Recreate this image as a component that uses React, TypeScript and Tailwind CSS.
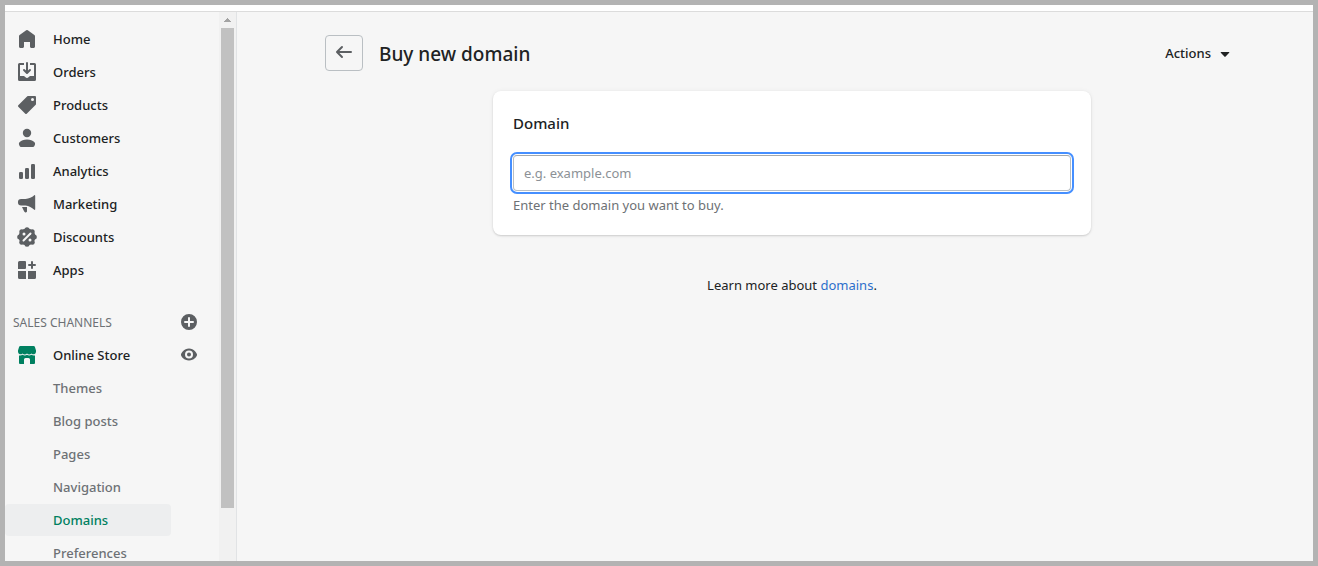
/**
 * Buy new domain – admin page with the store navigation on the left
 * and the domain search card in the main column.
 */

import type { ReactNode } from "react";

interface IconProps {
  children: ReactNode;
  className?: string;
}

function Icon({ children, className = "size-5" }: IconProps) {
  return (
    <svg viewBox="0 0 20 20" fill="currentColor" fillRule="evenodd" aria-hidden="true" className={`shrink-0 ${className}`}>
      {children}
    </svg>
  );
}

const NAV_ITEMS: { label: string; icon: ReactNode }[] = [
  {
    label: "Home",
    icon: (
      <path d="M18 7.261V17.5c0 .841-.672 1.5-1.5 1.5h-2c-.828 0-1.5-.659-1.5-1.5V13H7v4.477C7 18.318 6.328 19 5.5 19h-2c-.828 0-1.5-.682-1.5-1.523V7.261a1.5 1.5 0 0 1 .615-1.21l6.59-4.82a1.481 1.481 0 0 1 1.59 0l6.59 4.82A1.5 1.5 0 0 1 18 7.26z" />
    ),
  },
  {
    label: "Orders",
    icon: (
      <>
        <path d="M11 1a1 1 0 1 0-2 0v7.586L7.707 7.293a1 1 0 0 0-1.414 1.414l3 3a1 1 0 0 0 1.414 0l3-3a1 1 0 0 0-1.414-1.414L11 8.586V1z" />
        <path d="M3 14V3h4V1H2.5A1.5 1.5 0 0 0 1 2.5v15A1.5 1.5 0 0 0 2.5 19h15a1.5 1.5 0 0 0 1.5-1.5v-15A1.5 1.5 0 0 0 17.5 1H13v2h4v11h-3.5c-.775 0-1.388.662-1.926 1.244l-.11.12A1.994 1.994 0 0 1 10 16a1.994 1.994 0 0 1-1.463-.637l-.111-.12C7.888 14.664 7.275 14 6.5 14H3z" />
      </>
    ),
  },
  {
    label: "Products",
    icon: (
      <path d="M10.293 1.293A1 1 0 0 1 11 1h7a1 1 0 0 1 1 1v7a1 1 0 0 1-.293.707l-9 9a1 1 0 0 1-1.414 0l-7-7a1 1 0 0 1 0-1.414l9-9zM15.5 6a1.5 1.5 0 1 0 0-3 1.5 1.5 0 0 0 0 3z" />
    ),
  },
  {
    label: "Customers",
    icon: (
      <>
        <circle cx="10" cy="5" r="4.2" />
        <path d="M10 11.6c3.3 0 5.8 1.2 7.2 2.500.8.7 1 1.400.8 2.300-.4 1.700-1.200 2.600-3 2.600H5c-1.800 0-2.600-.9-3-2.600-.2-.9 0-1.600.8-2.300 1.400-1.300 3.900-2.500 7.200-2.500z" />
      </>
    ),
  },
  {
    label: "Analytics",
    icon: (
      <>
        <rect x="2" y="11" width="4" height="7" rx="1.3" />
        <rect x="8" y="7" width="4" height="11" rx="1.3" />
        <rect x="14" y="3" width="4" height="15" rx="1.3" />
      </>
    ),
  },
  {
    label: "Marketing",
    icon: (
      <>
        <path d="M17.300 1.200c.4-.3.900 0 .9.500v13.600c0 .5-.5.800-.9.500C14.800 13.600 12 12 8.500 11.500H4.200A3.200 3.200 0 0 1 4.200 5h4.300c3.500-.4 6.300-1.800 8.800-3.800z" />
        <path d="M5 13h5v4.200c0 .7-.5 1.200-1.200 1.200h-.4c-.5 0-1-.3-1.200-.8L5 13z" />
      </>
    ),
  },
  {
    label: "Discounts",
    icon: (
      <>
        <circle cx="10" cy="10" r="8.4" />
        <circle cx="10" cy="2.700" r="2.500" />
        <circle cx="15.200" cy="4.800" r="2.500" />
        <circle cx="17.300" cy="10" r="2.500" />
        <circle cx="15.200" cy="15.200" r="2.500" />
        <circle cx="10" cy="17.300" r="2.500" />
        <circle cx="4.800" cy="15.200" r="2.500" />
        <circle cx="2.700" cy="10" r="2.500" />
        <circle cx="4.800" cy="4.800" r="2.500" />
        <g className="fill-[#f6f6f6] stroke-[#f6f6f6]">
          <path d="M6.500 13.500l7-7" strokeWidth="2" strokeLinecap="round" />
          <circle cx="7" cy="7" r="1.500" strokeWidth="0" />
          <circle cx="13" cy="13" r="1.500" strokeWidth="0" />
        </g>
      </>
    ),
  },
  {
    label: "Apps",
    icon: (
      <>
        <path d="M2.500 1H8a1 1 0 0 1 1 1v6a1 1 0 0 1-1 1H1V2.500A1.500 1.500 0 0 1 2.500 1zM1 11h8v8H2.500A1.500 1.500 0 0 1 1 17.500V11zM11 11h8v6.500a1.500 1.500 0 0 1-1.500 1.500H11v-8z" />
        <path d="M14 2a1 1 0 1 1 2 0v2h2a1 1 0 1 1 0 2h-2v2a1 1 0 1 1-2 0V6h-2a1 1 0 1 1 0-2h2V2z" />
      </>
    ),
  },
];

const STORE_PAGES = ["Themes", "Blog posts", "Pages", "Navigation", "Domains", "Preferences"];

function Sidebar() {
  return (
    <aside className="flex w-58 shrink-0 overflow-hidden border-r border-[#e1e3e5]">
      <nav className="flex min-w-0 flex-1 flex-col pt-[11px] text-[13px] font-medium text-[#202223]">
        <ul className="space-y-px">
          {NAV_ITEMS.map((item) => (
            <li key={item.label}>
              <a href="#" className="flex h-8 items-center gap-4 pl-3">
                <Icon className="size-5 text-[#5c5f62]">{item.icon}</Icon>
                <span className="pt-0.5">{item.label}</span>
              </a>
            </li>
          ))}
        </ul>

        <div className="mt-5 flex h-8 shrink-0 items-center justify-between pr-5 pl-2">
          <h2 className="pt-0.5 text-xs font-normal text-[#6d7175]">SALES CHANNELS</h2>
          <button type="button" aria-label="Add sales channel" className="text-[#5c5f62]">
            <Icon>
              <path d="M10 2a8 8 0 1 0 0 16 8 8 0 0 0 0-16zM9 6a1 1 0 1 1 2 0v3h3a1 1 0 1 1 0 2h-3v3a1 1 0 1 1-2 0v-3H6a1 1 0 1 1 0-2h3V6z" />
            </Icon>
          </button>
        </div>

        <div className="mt-px flex h-8 shrink-0 items-center justify-between pr-5 pl-3">
          <a href="#" className="flex items-center gap-4">
            <Icon className="size-5 text-[#008060]">
              <path d="M3.500 1h13A1.500 1.500 0 0 1 18 2.200l1 3.300v1.200a2.600 2.600 0 0 1-4.500 1.800 3 3 0 0 1-4.500 0 3 3 0 0 1-4.500 0A2.600 2.600 0 0 1 1 6.700V5.500l1-3.300A1.500 1.500 0 0 1 3.500 1z" />
              <path d="M2 10.500c1.400.2 2.600 0 3.600-.7 1.300.9 3.100.9 4.400 0 1.300.9 3.100.9 4.400 0 1 .7 2.200.9 3.600.7V18a1 1 0 0 1-1 1h-4v-4.500a1.500 1.500 0 0 0-1.500-1.500h-3A1.500 1.500 0 0 0 7 14.500V19H3a1 1 0 0 1-1-1v-7.500z" />
            </Icon>
            <span className="pt-0.5">Online Store</span>
          </a>
          <button type="button" aria-label="View your online store" className="text-[#5c5f62]">
            <Icon>
              <path d="M10 3.500c-5 0-7.800 4.400-8 6a.8.8 0 0 0 0 .5c.2 1.600 3 5.500 8 5.500s7.800-3.900 8-5.500a.8.8 0 0 0 0-.5c-.2-1.600-3-6-8-6zM10 5.600a4 4 0 1 1 0 8 4 4 0 0 1 0-8zm0 2a2 2 0 1 0 0 4 2 2 0 0 0 0-4z" />
            </Icon>
          </button>
        </div>

        <ul className="mt-px space-y-px">
          {STORE_PAGES.map((page) => (
            <li key={page} className="pr-12">
              <a
                href="#"
                aria-current={page === "Domains" ? "page" : undefined}
                className={
                  page === "Domains"
                    ? "flex h-8 items-center rounded bg-[#edeeef] pt-0.5 pl-12 text-[#008060]"
                    : "flex h-8 items-center pt-0.5 pl-12 text-[#6d7175]"
                }
              >
                {page}
              </a>
            </li>
          ))}
        </ul>
      </nav>

      {/* Scroll track */}
      <div className="flex w-[17px] shrink-0 flex-col items-center bg-[#f1f1f1] text-[#a3a3a3]">
        <div className="flex h-4 shrink-0 items-center">
          <svg viewBox="0 0 7 4" className="w-[7px]" fill="currentColor" aria-hidden="true">
            <path d="M3 0h1v1h1v1h1v1h1v1H0V3h1V2h1V1h1z" />
          </svg>
        </div>
        <div className="h-[480px] w-[13px] shrink-0 bg-[#c1c1c1]" />
      </div>
    </aside>
  );
}

function DomainCard() {
  return (
    <section className="mx-auto mt-5 max-w-[598px] rounded-lg bg-white p-5 shadow-[0_0_5px_rgba(23,24,24,0.05),0_1px_2px_rgba(0,0,0,0.15)]">
      <label htmlFor="domain" className="block text-[15px] leading-6 font-medium">
        Domain
      </label>
      <input
        id="domain"
        type="text"
        placeholder="e.g. example.com"
        aria-describedby="domain-help"
        className="mt-5 block h-9 w-full rounded border border-[#babfc3] border-t-[#a4a8ab] px-2.5 text-[13px] outline-2 outline-offset-1 outline-[#458fff] placeholder:text-[#8c9196]"
      />
      <p id="domain-help" className="mt-1 leading-5 text-[#6d7175]">
        Enter the domain you want to buy.
      </p>
    </section>
  );
}

export default function App() {
  return (
    <div className="flex h-screen flex-col overflow-hidden border-5 border-[#b3b3b3] bg-[#f6f6f6] font-['Noto_Sans','Open_Sans',sans-serif] text-[13px] text-[#202223]">
      <div className="h-[7px] shrink-0 border-b border-[#dcdcdc] bg-white" />
      <div className="flex min-h-0 flex-1">
        <Sidebar />
        <main className="min-w-0 flex-1 pt-[23px] pl-[34px]">
          <div className="mx-auto max-w-[998px] px-8">
            <header className="flex items-center">
              <button
                type="button"
                aria-label="Back to domains"
                className="flex h-9 w-[38px] items-center justify-center rounded border border-[#babfc3] text-[#5c5f62]"
              >
                <Icon>
                  <path d="M17 8H5.414l3.293-3.293a1 1 0 0 0-1.414-1.414l-5 5a1 1 0 0 0 0 1.414l5 5a1 1 0 0 0 1.414-1.414L5.414 10H17a1 1 0 1 0 0-2z" />
                </Icon>
              </button>
              <h1 className="ml-4 pt-0.5 text-[19px] leading-7 font-medium">Buy new domain</h1>
              <button type="button" className="mr-6 ml-auto flex h-9 items-center gap-1 font-medium">
                <span className="pt-0.5">Actions</span>
                <Icon>
                  <path d="M6.200 9h7.600c.5 0 .7.500.4.800l-3.600 3.800a.8.800 0 0 1-1.200 0L5.800 9.800C5.500 9.500 5.700 9 6.200 9z" />
                </Icon>
              </button>
            </header>

            <DomainCard />

            <p className="mt-10 text-center leading-5">
              Learn more about{" "}
              <a href="#" className="text-[#2c6ecb]">
                domains
              </a>
              .
            </p>
          </div>
        </main>
      </div>
    </div>
  );
}
